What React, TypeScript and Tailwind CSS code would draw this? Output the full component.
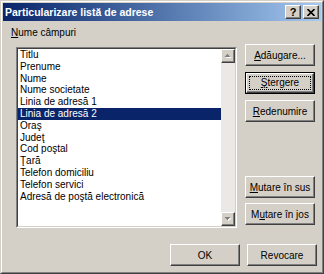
import type { ReactNode } from 'react';

const items = [
  'Titlu',
  'Prenume',
  'Nume',
  'Nume societate',
  'Linia de adresă 1',
  'Linia de adresă 2',
  'Oraş',
  'Judeţ',
  'Cod poştal',
  'Ţară',
  'Telefon domiciliu',
  'Telefon servici',
  'Adresă de poştă electronică',
];

const raised =
  'border border-t-white border-l-white border-r-[#404040] border-b-[#404040] shadow-[inset_-1px_-1px_#808080,inset_1px_1px_#d4d0c8]';

function Btn({ children, focused = false }: { children: ReactNode; focused?: boolean }) {
  if (focused) {
    return (
      <div className="w-[70px] h-[22px] border border-black bg-[#d4d0c8]">
        <div className={`h-full ${raised} p-[2px] flex`}>
          <div className="flex-1 border border-dotted border-black flex items-center justify-center leading-[12px]">
            {children}
          </div>
        </div>
      </div>
    );
  }
  return (
    <div className={`w-[70px] h-[22px] bg-[#d4d0c8] ${raised} flex items-center justify-center leading-[13px]`}>
      {children}
    </div>
  );
}

function Arrow({ up }: { up?: boolean }) {
  return (
    <div className={`w-[14px] h-[14px] bg-[#d4d0c8] ${raised} flex items-center justify-center`}>
      <svg width="8" height="6" viewBox="0 0 8 6">
        {up ? (
          <>
            <path d="M1.5 5 L4.5 1.8 L7.5 5 Z" fill="white" />
            <path d="M0.5 4 L3.5 0.8 L6.5 4 Z" fill="#808080" />
          </>
        ) : (
          <>
            <path d="M1.5 2 L4.5 5.2 L7.5 2 Z" fill="white" />
            <path d="M0.5 1 L3.5 4.2 L6.5 1 Z" fill="#808080" />
          </>
        )}
      </svg>
    </div>
  );
}

export default function App() {
  return (
    <div
      className="w-[324px] h-[274px] bg-[#d4d0c8] border-t border-l border-t-[#d4d0c8] border-l-[#d4d0c8] border-r border-b border-r-[#404040] border-b-[#404040] text-[10px] text-black overflow-hidden"
      style={{ fontFamily: '"Liberation Sans", Arial, sans-serif' }}
    >
      <div className="w-full h-full border-t border-l border-t-white border-l-white border-r border-b border-r-[#808080] border-b-[#808080] p-px flex flex-col">
        {/* title bar */}
        <div className="h-[18px] flex items-center bg-gradient-to-r from-[#0a246a] to-[#a6caf0] pl-[2px] pr-[2px]">
          <div className="flex-1 text-white font-bold text-[10.5px] leading-[13px]">Particularizare listă de adrese</div>
          <div className={`w-[16px] h-[14px] bg-[#d4d0c8] ${raised} flex items-center justify-center font-bold text-[11px] leading-none`}>
            ?
          </div>
          <div className={`ml-[2px] w-[16px] h-[14px] bg-[#d4d0c8] ${raised} flex items-center justify-center`}>
            <svg width="8" height="7" viewBox="0 0 8 7">
              <path d="M0.5 0 L7.5 7 M7.5 0 L0.5 7" stroke="black" strokeWidth="1.6" />
            </svg>
          </div>
        </div>

        {/* body */}
        <div className="flex-1 flex flex-col">
          <div className="mt-[5px] ml-[8px] leading-[13px]">
            <u className="underline-offset-1">N</u>ume câmpuri
          </div>

          <div className="mt-[5px] flex">
            <div className="ml-[13px] mt-[3px] w-[221px] h-[181px] border-t border-l border-t-[#808080] border-l-[#808080] border-r border-b border-r-white border-b-white">
              <div className="w-full h-full border-t border-l border-t-[#404040] border-l-[#404040] border-r border-b border-r-[#d4d0c8] border-b-[#d4d0c8] bg-white flex">
                <div className="flex-1 flex flex-col">
                  {items.map((it, i) => (
                    <div
                      key={it}
                      className={`h-[11.8px] leading-[11.8px] pl-[2px] whitespace-nowrap ${
                        i === 5 ? 'bg-[#0a246a] text-white' : ''
                      }`}
                    >
                      {it}
                    </div>
                  ))}
                </div>
                <div className="w-[14px] flex flex-col bg-[#ebe9e5]">
                  <Arrow up />
                  <div className="flex-1" />
                  <Arrow />
                </div>
              </div>
            </div>

            <div className="ml-[8px] flex flex-col">
              <Btn>
                <u>A</u>dăugare...
              </Btn>
              <div className="mt-[6px]">
                <Btn focused>
                  <u>Ş</u>tergere
                </Btn>
              </div>
              <div className="mt-[6px]">
                <Btn>
                  <u>R</u>edenumire
                </Btn>
              </div>
              <div className="mt-[54px]">
                <Btn>
                  <u>M</u>utare în sus
                </Btn>
              </div>
              <div className="mt-[5px]">
                <Btn>
                  M<u>u</u>tare în jos
                </Btn>
              </div>
            </div>
          </div>

          <div className="mt-[16px] flex justify-end pr-[4px] gap-[7px]">
            <Btn>OK</Btn>
            <Btn>Revocare</Btn>
          </div>
        </div>
      </div>
    </div>
  );
}
